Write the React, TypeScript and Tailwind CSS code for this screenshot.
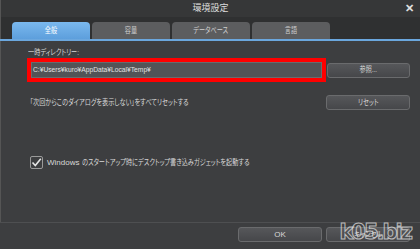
import React from 'react'

// ─── SETTINGS DIALOG ───────────────────────────────────────────
const font = 'font-["Liberation_Sans","Noto_Sans_CJK_JP",sans-serif]'

const tabs = ['全般', '容量', 'データベース', '言語']

// narrow Japanese text (condensed, like Meiryo UI)
const Jp: React.FC<{ children: React.ReactNode; className?: string }> = ({ children, className = 'origin-left' }) => (
  <span className={`inline-block whitespace-nowrap [font-feature-settings:'palt'] scale-x-[0.77] ${className}`}>{children}</span>
)

const Button: React.FC<{ label: React.ReactNode; className?: string }> = ({ label, className = '' }) => (
  <div
    className={`h-[15px] w-[83px] flex items-center justify-center rounded-[3px] border border-[#6a6b6d] bg-gradient-to-b from-[#56575a] to-[#46474a] text-[8px] text-[#d8d8d8] ${className}`}
  >
    {label}
  </div>
)

export default function App() {
  return (
    <div className={`w-[420px] h-[249px] flex flex-col bg-[#3d3e40] overflow-hidden ${font}`}>
      {/* Title bar */}
      <div className="relative h-[17px] flex items-center justify-center bg-[#363738] border-l border-[#555]">
        <span className="text-[9px] text-[#dcdcdc]">環境設定</span>
        <span className="absolute right-[6px] top-[3px] text-[11px] leading-none text-[#e0e0e0] font-bold">✕</span>
      </div>

      {/* Tabs */}
      <div className="h-[22px] flex items-end gap-[2px] pl-[11px] bg-[#2f3031] border-l border-[#555]">
        {tabs.map((t, i) => (
          <div
            key={t}
            className={`h-[17px] w-[78px] flex items-center justify-center rounded-t-[4px] text-[8px] ${
              i === 0
                ? 'bg-gradient-to-b from-[#7ab8ee] to-[#5d9fdc] text-white'
                : 'bg-[#5c5d5f] text-[#cfcfcf]'
            }`}
          >
            <Jp className="origin-center">{t}</Jp>
          </div>
        ))}
      </div>
      <div className="h-[2px] bg-[#6ba7de]" />

      {/* Body */}
      <div className="flex-1 flex flex-col border-l border-[#555] pl-[26px] pr-[10px]">
        <div className="mt-[6px] pl-[1px] text-[8px] leading-[11px] text-[#d8d8d8]">
          <Jp>一時ディレクトリー:</Jp>
        </div>
        <div className="flex items-center">
          <div className="w-[300px] h-[24px] border-[4px] border-[#ff0000]">
            <div className="h-full border border-[#6a6b6d] bg-[#525457] flex items-center px-[1px] text-[6.7px] text-[#e2e2e2]">
              C:¥Users¥kuro¥AppData¥Local¥Temp¥
            </div>
          </div>
          <Button label={<Jp className="origin-center">参照...</Jp>} className="ml-[1px]" />
        </div>

        <div className="flex items-center justify-between mt-[13px]">
          <span className="pl-[3px] text-[8px] text-[#d8d8d8]">
            <Jp>「次回からこのダイアログを表示しない」をすべてリセットする</Jp>
          </span>
          <Button label={<Jp className="origin-center">リセット</Jp>} className="w-[84px]" />
        </div>

        <div className="flex items-center mt-[46px] pl-[3px] gap-[4px]">
          <div className="w-[13px] h-[13px] rounded-[2px] border border-[#9a9a9a] flex items-center justify-center">
            <svg width="11" height="11" viewBox="0 0 11 11">
              <path d="M1.5 5.5 L4.3 8.5 L9.8 1.8" fill="none" stroke="#e6e6e6" strokeWidth="1.6" />
            </svg>
          </div>
          <span className="text-[8px] text-[#d8d8d8] whitespace-nowrap">
            Windows <Jp>のスタートアップ時にデスクトップ書き込みガジェットを起動する</Jp>
          </span>
        </div>
      </div>

      {/* Footer */}
      <div className="relative h-[27px] border-t border-[#4e4f51] flex items-start justify-end gap-[4px] pr-[10px] pt-[4px] bg-[#3d3e40]">
        <Button label="OK" className="w-[84px]" />
        <Button label={<Jp className="origin-center">キャンセル</Jp>} className="w-[84px]" />
        <span className="absolute right-[9px] top-[-1px] text-[21px] leading-none font-bold tracking-[-2px] text-transparent [-webkit-text-stroke:1px_rgba(225,225,225,0.75)] font-['DejaVu_Sans',sans-serif]">
          k05.biz
        </span>
      </div>
    </div>
  )
}
